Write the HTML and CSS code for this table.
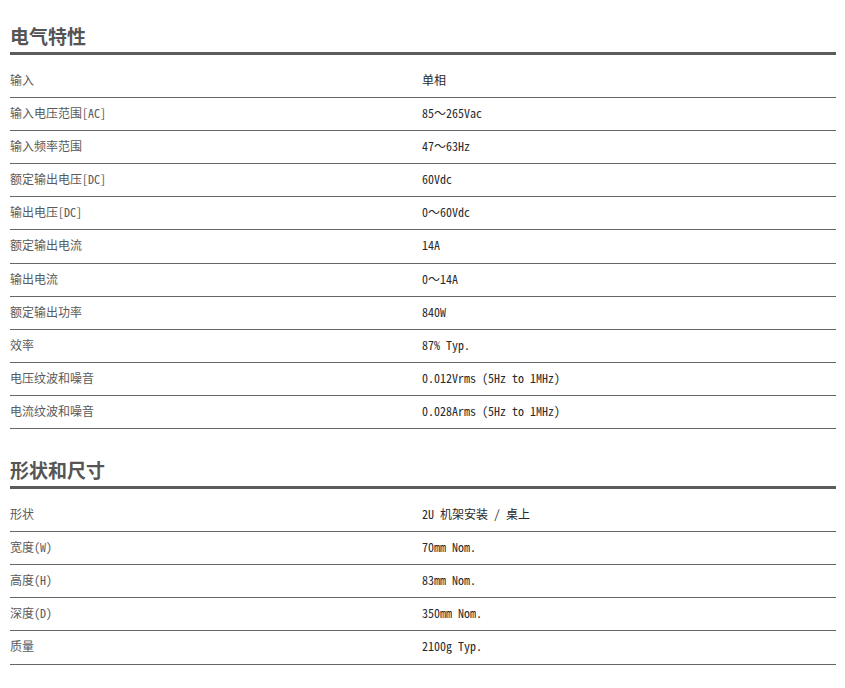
FILE: index.html
```html
<!DOCTYPE html>
<html lang="zh">
<head>
<meta charset="utf-8">
<title>电气特性</title>
<link rel="stylesheet" href="styles.css">
</head>
<body>
<div class="page">
  <section class="spec">
    <h2 class="spec-title">电气特性</h2>
    <div class="spec-table">
      <div class="row"><div class="label">输入</div><div class="value">单相</div></div>
      <div class="row"><div class="label">输入电压范围[AC]</div><div class="value">85～265Vac</div></div>
      <div class="row"><div class="label">输入频率范围</div><div class="value">47～63Hz</div></div>
      <div class="row"><div class="label">额定输出电压[DC]</div><div class="value">60Vdc</div></div>
      <div class="row"><div class="label">输出电压[DC]</div><div class="value">0～60Vdc</div></div>
      <div class="row"><div class="label">额定输出电流</div><div class="value">14A</div></div>
      <div class="row"><div class="label">输出电流</div><div class="value">0～14A</div></div>
      <div class="row"><div class="label">额定输出功率</div><div class="value">840W</div></div>
      <div class="row"><div class="label">效率</div><div class="value">87% Typ.</div></div>
      <div class="row"><div class="label">电压纹波和噪音</div><div class="value">0.012Vrms (5Hz to 1MHz)</div></div>
      <div class="row"><div class="label">电流纹波和噪音</div><div class="value">0.028Arms (5Hz to 1MHz)</div></div>
    </div>
  </section>
  <section class="spec">
    <h2 class="spec-title">形状和尺寸</h2>
    <div class="spec-table">
      <div class="row"><div class="label">形状</div><div class="value">2U 机架安装 / 桌上</div></div>
      <div class="row"><div class="label">宽度(W)</div><div class="value">70mm Nom.</div></div>
      <div class="row"><div class="label">高度(H)</div><div class="value">83mm Nom.</div></div>
      <div class="row"><div class="label">深度(D)</div><div class="value">350mm Nom.</div></div>
      <div class="row"><div class="label">质量</div><div class="value">2100g Typ.</div></div>
    </div>
  </section>
</div>
</body>
</html>
```
FILE: styles.css
```css
html, body {
  margin: 0;
  padding: 0;
  background: #ffffff;
}
body {
  font-family: "Noto Sans Mono CJK SC", "Noto Sans CJK SC", "DejaVu Sans Mono", monospace;
  font-size: 12px;
}
.page {
  width: 826px;
  margin-left: 10px;
  padding-top: 20px;
}
.spec + .spec {
  margin-top: 25px;
}
.spec-title {
  margin: 0;
  height: 32px;
  line-height: 32px;
  font-family: "Noto Sans CJK SC", sans-serif;
  font-size: 19px;
  font-weight: 700;
  color: #555555;
  border-bottom: 3px solid #5c5c5c;
}
.spec-table {
  margin-top: 10px;
}
.row {
  display: grid;
  grid-template-columns: 412px 1fr;
  height: 32.1px;
  line-height: 30px;
  border-bottom: 1px solid #666666;
}
.label {
  color: #5a5a5a;
}
.value {
  color: #2a2a2a;
}
```
